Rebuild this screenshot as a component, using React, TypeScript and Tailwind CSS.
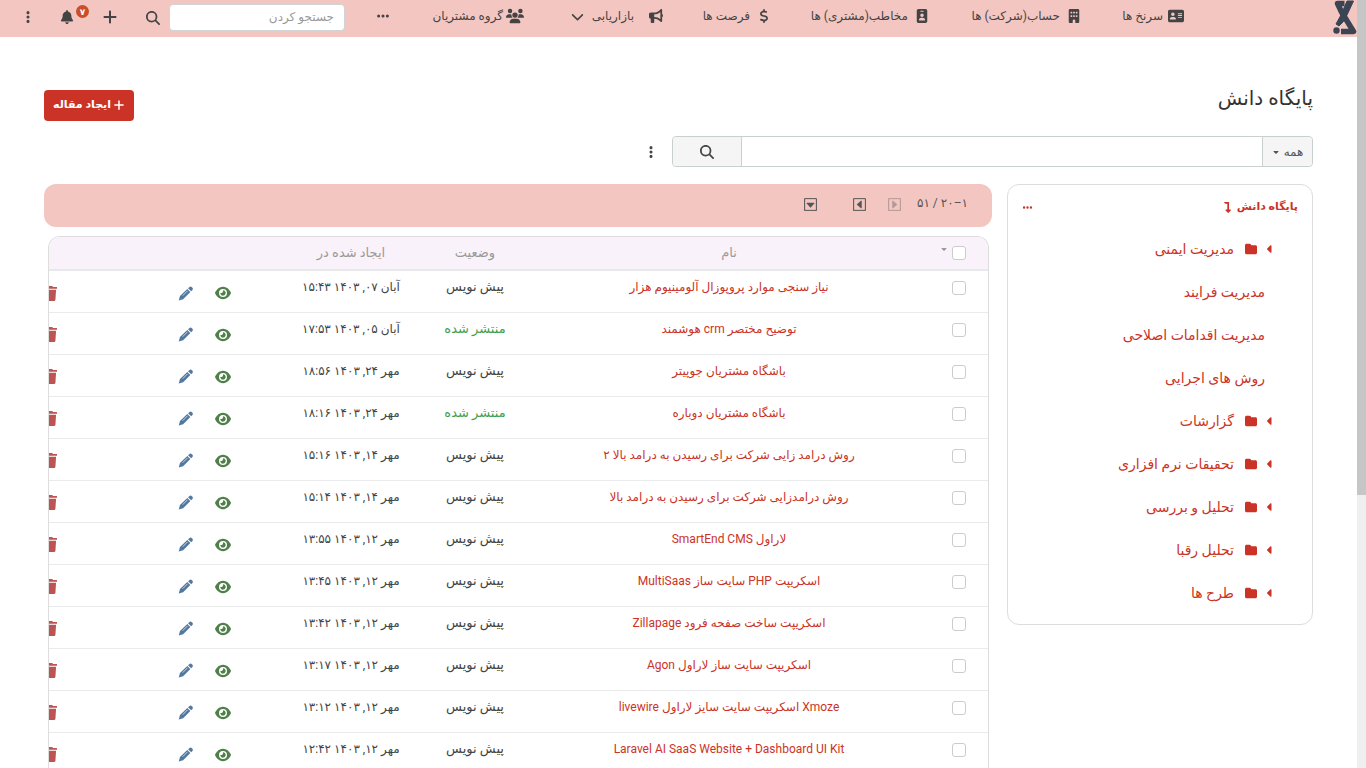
import React from 'react';
import { FaLevelDownAlt } from 'react-icons/fa';
import { BsCaretDownSquare, BsCaretLeftSquare, BsCaretRightSquare } from 'react-icons/bs';
import {
  FaAddressCard,
  FaBell,
  FaBuilding,
  FaBullhorn,
  FaCaretDown,
  FaCaretLeft,
  FaChevronDown,
  FaDollarSign,
  FaEllipsis,
  FaEllipsisVertical,
  FaEye,
  FaFolder,
  FaIdBadge,
  FaMagnifyingGlass,
  FaPlus,
  FaUsers,
} from 'react-icons/fa6';

const navItems = [
  { label: 'سرنخ ها', icon: FaAddressCard, width: 'w-[103px]', iconBox: 'w-[21px]', iconSize: 'size-4' },
  { label: 'حساب(شرکت) ها', icon: FaBuilding, width: 'w-[152px]', iconBox: 'w-[21px]', iconSize: 'size-[14px]' },
  { label: 'مخاطب(مشتری) ها', icon: FaIdBadge, width: 'w-[158px]', iconBox: 'w-[21px]', iconSize: 'size-[14px]' },
  { label: 'فرصت ها', icon: FaDollarSign, width: 'w-[108px]', iconBox: 'w-[21px]', iconSize: 'size-[14px]' },
  { label: 'بازاریابی', icon: FaBullhorn, width: 'w-[139px]', iconBox: 'w-[29px]', iconSize: 'size-[14px]', open: true },
  { label: 'گروه مشتریان', icon: FaUsers, width: 'w-[134px]', iconBox: 'w-[21px]', iconSize: 'size-[18px]' },
];

const categories = [
  { name: 'مدیریت ایمنی', folder: true },
  { name: 'مدیریت فرایند', folder: false },
  { name: 'مدیریت اقدامات اصلاحی', folder: false },
  { name: 'روش های اجرایی', folder: false },
  { name: 'گزارشات', folder: true },
  { name: 'تحقیقات نرم افزاری', folder: true },
  { name: 'تحلیل و بررسی', folder: true },
  { name: 'تحلیل رقبا', folder: true },
  { name: 'طرح ها', folder: true },
];

const articles = [
  { name: 'نیاز سنجی موارد پروپوزال آلومینیوم هزار', published: false, date: 'آبان ۰۷, ۱۴۰۳ ۱۵:۴۳' },
  { name: 'توضیح مختصر crm هوشمند', published: true, date: 'آبان ۰۵, ۱۴۰۳ ۱۷:۵۳' },
  { name: 'باشگاه مشتریان جوپیتر', published: false, date: 'مهر ۲۴, ۱۴۰۳ ۱۸:۵۶' },
  { name: 'باشگاه مشتریان دوباره', published: true, date: 'مهر ۲۴, ۱۴۰۳ ۱۸:۱۶' },
  { name: 'روش درامد زایی شرکت برای رسیدن به درامد بالا ۲', published: false, date: 'مهر ۱۴, ۱۴۰۳ ۱۵:۱۶' },
  { name: 'روش درامدزایی شرکت برای رسیدن به درامد بالا', published: false, date: 'مهر ۱۴, ۱۴۰۳ ۱۵:۱۴' },
  { name: 'لاراول SmartEnd CMS', published: false, date: 'مهر ۱۲, ۱۴۰۳ ۱۳:۵۵' },
  { name: 'اسکریپت PHP سایت ساز MultiSaas', published: false, date: 'مهر ۱۲, ۱۴۰۳ ۱۳:۴۵' },
  { name: 'اسکریپت ساخت صفحه فرود Zillapage', published: false, date: 'مهر ۱۲, ۱۴۰۳ ۱۳:۴۲' },
  { name: 'اسکریپت سایت ساز لاراول Agon', published: false, date: 'مهر ۱۲, ۱۴۰۳ ۱۳:۱۷' },
  { name: 'Xmoze اسکریپت سایت سایز لاراول livewire', published: false, date: 'مهر ۱۲, ۱۴۰۳ ۱۳:۱۲' },
  { name: 'Laravel AI SaaS Website + Dashboard UI Kit', published: false, date: 'مهر ۱۲, ۱۴۰۳ ۱۲:۴۲' },
];

function Logo() {
  return (
    <svg viewBox="0 0 24 36" className="h-9 w-6" fill="none" stroke="#3b4453" strokeWidth="5" strokeLinejoin="round">
      <path d="M11.500 3.500H4.500L8.500 12 20.500 31.500H8" strokeWidth="5.500" />
      <path d="M14 1h6.500L14 15l-4 7-4 4-3-2 5-9z" fill="#3b4453" strokeWidth="1" />
      <circle cx="3.500" cy="30.500" r="3.200" fill="#3b4453" stroke="none" />
    </svg>
  );
}

function PencilIcon() {
  return (
    <svg viewBox="0 0 16 16" className="size-[15px] text-[#5378a0]" fill="currentColor">
      <path d="M12 1.200a2 2 0 0 1 2.800 0l.4.400a2 2 0 0 1 0 2.800L14 5.600 10.700 2.300z" />
      <path d="M9.900 3.100l3.300 3.300-7.700 7.700-4.700 1.300 1.300-4.700z" />
      <path d="M5 10.300l5.200-5.200" stroke="#fff" strokeWidth=".7" />
    </svg>
  );
}

function TrashIcon() {
  return (
    <svg viewBox="0 0 14 16" className="h-[15px] w-[13px] text-[#bc5454]" fill="currentColor">
      <path d="M5 0h4l.6 1H14v2H0V1h4.400z" />
      <path d="M1 4h12l-.7 10.600a1.500 1.500 0 0 1-1.500 1.400H3.200a1.500 1.500 0 0 1-1.500-1.400z" />
    </svg>
  );
}

function Navbar() {
  return (
    <header className="flex h-[37px] items-start bg-[#f4c6c1] text-[#444]">
      <a href="#" aria-label="خانه" className="w-[173px] shrink-0">
        <Logo />
      </a>
      <nav className="flex shrink-0">
        {navItems.map((item) => (
          <a key={item.label} href="#" className={`flex h-8 shrink-0 items-center whitespace-nowrap ${item.width}`}>
            <span className={`flex shrink-0 ${item.iconBox}`}>
              <item.icon className={item.iconSize} />
            </span>
            {item.label}
            {item.open && <FaChevronDown className="ms-2 size-[13px]" />}
          </a>
        ))}
      </nav>
      <button aria-label="بیشتر" className="flex h-8 items-center">
        <FaEllipsis className="size-[14px]" />
      </button>
      <div className="ms-auto flex items-center gap-[9px] pt-1">
        <input
          aria-label="جستجو"
          placeholder="جستجو کردن"
          className="h-[27px] w-[176px] rounded border border-[#d0d4d5] bg-white px-[10px] pb-[2px] placeholder:text-[#999]"
        />
        <button aria-label="جستجو">
          <FaMagnifyingGlass className="size-[14px]" />
        </button>
      </div>
      <div className="flex h-[34px] items-center pe-[21px] ps-7">
        <button aria-label="ایجاد">
          <FaPlus className="size-4" />
        </button>
        <button aria-label="اعلان ها" className="relative ms-7">
          <FaBell className="size-[14px]" />
          <span className="absolute -top-[5px] left-4 flex size-[13px] items-center justify-center rounded-full bg-[#ca4f28] text-[9px] font-bold text-white">
            ۷
          </span>
        </button>
        <button aria-label="منو" className="ms-[25px]">
          <FaEllipsisVertical className="size-[14px]" />
        </button>
      </div>
    </header>
  );
}

function Sidebar() {
  return (
    <aside className="w-[306px] shrink-0 self-start rounded-xl border border-[#ddd] px-[14px] pb-[10px] pt-2 text-[#cc3327]">
      <div className="flex h-7 items-center justify-between text-[11px] font-bold">
        <a href="#" className="flex items-center gap-1">
          پایگاه دانش
          <FaLevelDownAlt className="size-[11px]" />
        </a>
        <button aria-label="گزینه ها">
          <FaEllipsis className="size-[11px]" />
        </button>
      </div>
      <ul className="pt-[6px]">
        {categories.map((category) => (
          <li key={category.name} className="flex h-[43px] items-center ps-[22px] text-sm">
            {category.folder && (
              <>
                <FaCaretLeft className="size-3" />
                <FaFolder className="me-[11px] ms-[7px] size-3" />
              </>
            )}
            <a href="#" className={category.folder ? '' : 'ps-[11px]'}>
              {category.name}
            </a>
          </li>
        ))}
      </ul>
    </aside>
  );
}

function ArticleTable() {
  return (
    <div className="me-1 ms-[3px] mt-[9px] overflow-hidden rounded-t-xl border border-b-0 border-[#ddd]">
      <table className="w-[calc(100%+21px)] table-fixed border-collapse">
        <colgroup>
          <col className="w-[63px]" />
          <col />
          <col className="w-[116px]" />
          <col className="w-[132px]" />
          <col className="w-[257px]" />
        </colgroup>
        <thead>
          <tr className="h-[33px] border-b-2 border-[#e6e8e9] bg-[#f9f2fa] text-[13px] text-[#999]">
            <th>
              <span className="flex items-center gap-1 ps-[22px]">
                <input
                  type="checkbox"
                  aria-label="انتخاب همه"
                  className="size-[14px] appearance-none rounded-[3px] border border-[#ccc] bg-white"
                />
                <FaCaretDown className="mb-2 size-2" />
              </span>
            </th>
            <th className="font-normal">نام</th>
            <th className="font-normal">وضعیت</th>
            <th className="font-normal">ایجاد شده در</th>
            <th aria-label="عملیات" />
          </tr>
        </thead>
        <tbody>
          {articles.map((article) => (
            <tr key={article.name} className="h-[42px] border-b border-[#e8eaeb] text-center align-top text-[#444]">
              <td className="pt-[10px]">
                <input
                  type="checkbox"
                  aria-label={article.name}
                  className="ms-[22px] block size-[14px] appearance-none rounded-[3px] border border-[#ccc] bg-white"
                />
              </td>
              <td className="whitespace-nowrap pt-[6px]">
                <a href="#" className="text-[#cc3327]">{article.name}</a>
              </td>
              <td className="whitespace-nowrap pt-[6px] text-[13px]">
                {article.published ? <span className="text-[#3f9f50]">منتشر شده</span> : 'پیش نویس'}
              </td>
              <td className="whitespace-nowrap pt-[6px]">{article.date}</td>
              <td className="pt-[14px]">
                <div className="flex items-center ps-[54px]">
                  <a href="#" aria-label="نمایش">
                    <FaEye className="size-4 text-[#4f804a]" />
                  </a>
                  <a href="#" aria-label="ویرایش" className="ms-[22px]">
                    <PencilIcon />
                  </a>
                  <a href="#" aria-label="حذف" className="ms-[121px]">
                    <TrashIcon />
                  </a>
                </div>
              </td>
            </tr>
          ))}
        </tbody>
      </table>
    </div>
  );
}

export default function App() {
  return (
    <div dir="rtl" className="flex h-screen overflow-hidden bg-white font-['Roboto','DejaVu_Sans',sans-serif] text-[12px] leading-5">
      <div className="w-[9px] shrink-0 bg-[#efefef]">
        <div className="h-[495px] bg-[#c6c6c6]" />
      </div>
      <div className="min-w-0 flex-1">
        <Navbar />
        <main className="px-11 pt-[45px]">
          <div className="flex h-[39px] items-start justify-between">
            <h1 className="pt-1 text-xl leading-6 text-[#333]">پایگاه دانش</h1>
            <button className="mt-2 flex h-[31px] shrink-0 items-center gap-[2px] rounded bg-[#cc3327] px-[9px] pb-[2px] text-[11px] font-bold text-white">
              <FaPlus className="size-3" />
              ایجاد مقاله
            </button>
          </div>
          <div className="mt-[15px] flex items-center">
            <div className="flex h-[31px] w-[641px] rounded border border-[#c9d0cf]">
              <button className="flex w-[49px] items-center justify-center gap-1 rounded-s bg-[#f5f5f5] text-[#555]">
                همه
                <FaCaretDown className="size-2" />
              </button>
              <input aria-label="جستجوی مقاله" className="min-w-0 flex-1 border-x border-[#c9d0cf] px-2" />
              <button aria-label="جستجو" className="flex w-[68px] items-center justify-center rounded-e bg-[#f5f5f5] text-[#444]">
                <FaMagnifyingGlass className="size-[14px]" />
              </button>
            </div>
            <button aria-label="گزینه های بیشتر" className="ms-[14px] text-[#444]">
              <FaEllipsisVertical className="size-[14px]" />
            </button>
          </div>
          <div className="mt-[17px] flex gap-[15px]">
            <Sidebar />
            <section className="min-w-0 flex-1">
              <div className="flex h-[43px] items-center rounded-xl bg-[#f4c6c1] pb-[2px] ps-6 text-[#555]">
                <span className="pb-1">۱–۲۰ / ۵۱</span>
                <button aria-label="صفحه قبل" disabled className="ms-4 opacity-40">
                  <BsCaretRightSquare className="size-[13px]" strokeWidth="0.5" />
                </button>
                <button aria-label="صفحه بعد" className="ms-[22px]">
                  <BsCaretLeftSquare className="size-[13px]" strokeWidth="0.5" />
                </button>
                <button aria-label="گزینه های فهرست" className="ms-9">
                  <BsCaretDownSquare className="size-[13px]" strokeWidth="0.5" />
                </button>
              </div>
              <ArticleTable />
            </section>
          </div>
        </main>
      </div>
    </div>
  );
}
